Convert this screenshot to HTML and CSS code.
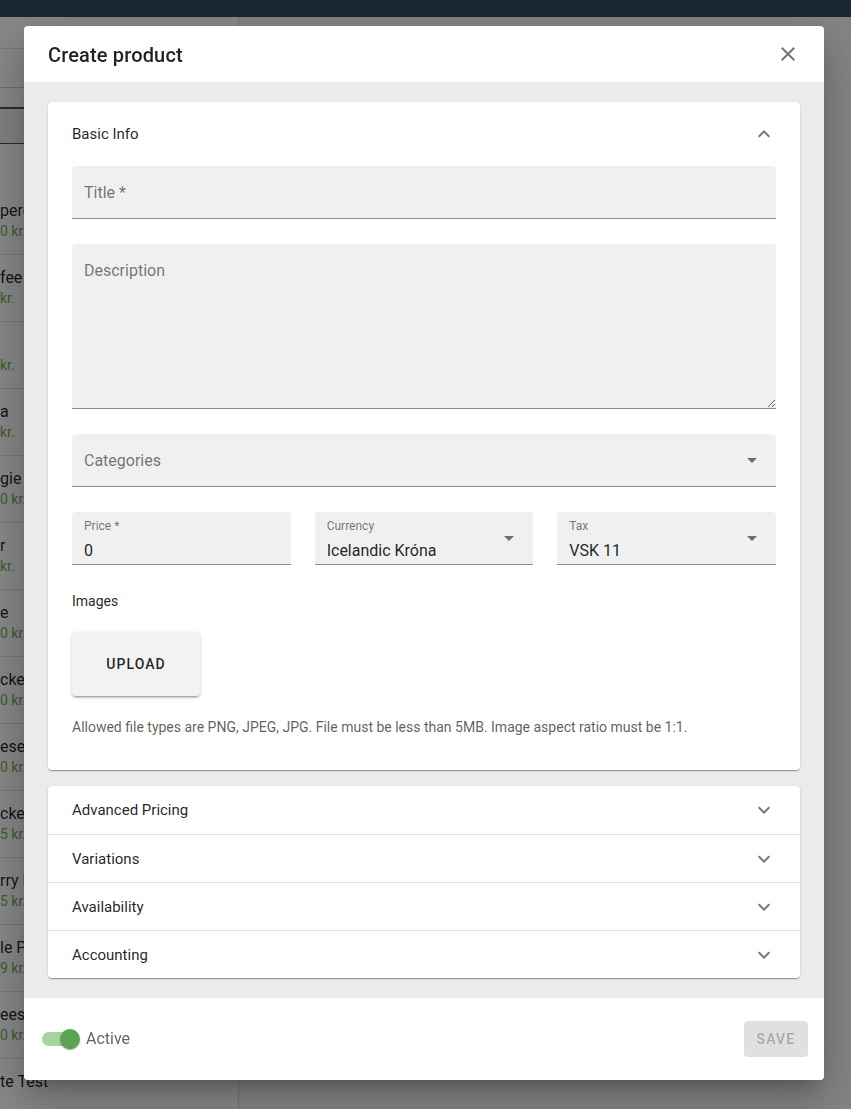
FILE: index.html
```html
<!DOCTYPE html>
<html lang="en">
<head>
<meta charset="utf-8">
<title>Create product</title>
<link rel="stylesheet" href="styles.css">
</head>
<body>
<div class="page">
  <header class="appbar"></header>
  <div class="main">
    <aside class="sidebar">
      <div class="sb-toolbar"></div>
      <div class="sb-search"></div>
      <div class="sb-tabs-head"></div>
      <div class="sb-tabs"></div>
      <div class="sb-spacer"></div>
      <ul class="product-list">
        <li class="product"><span class="p-name">perc</span><span class="p-price">0 kr.</span></li>
        <li class="product"><span class="p-name">fee</span><span class="p-price">kr.</span></li>
        <li class="product"><span class="p-name">&nbsp;</span><span class="p-price">kr.</span></li>
        <li class="product"><span class="p-name">a</span><span class="p-price">kr.</span></li>
        <li class="product"><span class="p-name">gie</span><span class="p-price">0 kr.</span></li>
        <li class="product"><span class="p-name">r</span><span class="p-price">kr.</span></li>
        <li class="product"><span class="p-name">e</span><span class="p-price">0 kr.</span></li>
        <li class="product"><span class="p-name">cker</span><span class="p-price">0 kr.</span></li>
        <li class="product"><span class="p-name">ese</span><span class="p-price">0 kr.</span></li>
        <li class="product"><span class="p-name">cker</span><span class="p-price">5 kr.</span></li>
        <li class="product"><span class="p-name">rry P</span><span class="p-price">5 kr.</span></li>
        <li class="product"><span class="p-name">le P</span><span class="p-price">9 kr.</span></li>
        <li class="product"><span class="p-name">ees</span><span class="p-price">0 kr.</span></li>
        <li class="product"><span class="p-name">te Test</span></li>
      </ul>
    </aside>
    <section class="workspace"></section>
  </div>
</div>

<div class="backdrop"></div>

<div class="dialog" role="dialog" aria-labelledby="dlg-title">
  <div class="dialog-header">
    <h2 class="dialog-title" id="dlg-title">Create product</h2>
    <button class="icon-btn" type="button" aria-label="Close">
      <svg class="icon" viewBox="0 0 24 24" width="24" height="24"><path fill="currentColor" d="M19 6.41L17.59 5 12 10.59 6.41 5 5 6.41 10.59 12 5 17.59 6.41 19 12 13.41 17.59 19 19 17.59 13.41 12z"/></svg>
    </button>
  </div>

  <div class="dialog-content">
    <div class="panel">
      <div class="panel-summary">
        <span class="panel-title">Basic Info</span>
        <svg class="icon" viewBox="0 0 24 24" width="24" height="24"><path fill="currentColor" d="M12 8l-6 6 1.41 1.41L12 10.83l4.59 4.58L18 14z"/></svg>
      </div>
      <div class="panel-details">
        <div class="field field-line"><span class="field-label">Title *</span></div>
        <div class="field field-desc">
          <span class="field-label desc-label">Description</span>
          <textarea class="desc-input" aria-label="Description"></textarea>
        </div>
        <div class="field field-line">
          <span class="field-label">Categories</span>
          <svg class="icon arrow" viewBox="0 0 24 24" width="24" height="24"><path fill="currentColor" d="M7 10l5 5 5-5z"/></svg>
        </div>
        <div class="field-row">
          <div class="field field-small">
            <div class="field-text"><span class="shrink-label">Price *</span><span class="field-value">0</span></div>
          </div>
          <div class="field field-small">
            <div class="field-text"><span class="shrink-label">Currency</span><span class="field-value">Icelandic Króna</span></div>
            <svg class="icon arrow" viewBox="0 0 24 24" width="24" height="24"><path fill="currentColor" d="M7 10l5 5 5-5z"/></svg>
          </div>
          <div class="field field-small">
            <div class="field-text"><span class="shrink-label">Tax</span><span class="field-value">VSK 11</span></div>
            <svg class="icon arrow" viewBox="0 0 24 24" width="24" height="24"><path fill="currentColor" d="M7 10l5 5 5-5z"/></svg>
          </div>
        </div>
        <div class="images-label">Images</div>
        <button class="upload-btn" type="button">UPLOAD</button>
        <p class="helper">Allowed file types are PNG, JPEG, JPG. File must be less than 5MB. Image aspect ratio must be 1:1.</p>
      </div>
    </div>

    <div class="panel panel-list">
      <div class="panel-row"><span class="panel-title">Advanced Pricing</span><svg class="icon" viewBox="0 0 24 24" width="24" height="24"><path fill="currentColor" d="M16.59 8.59L12 13.17 7.41 8.59 6 10l6 6 6-6z"/></svg></div>
      <div class="panel-row"><span class="panel-title">Variations</span><svg class="icon" viewBox="0 0 24 24" width="24" height="24"><path fill="currentColor" d="M16.59 8.59L12 13.17 7.41 8.59 6 10l6 6 6-6z"/></svg></div>
      <div class="panel-row"><span class="panel-title">Availability</span><svg class="icon" viewBox="0 0 24 24" width="24" height="24"><path fill="currentColor" d="M16.59 8.59L12 13.17 7.41 8.59 6 10l6 6 6-6z"/></svg></div>
      <div class="panel-row"><span class="panel-title">Accounting</span><svg class="icon" viewBox="0 0 24 24" width="24" height="24"><path fill="currentColor" d="M16.59 8.59L12 13.17 7.41 8.59 6 10l6 6 6-6z"/></svg></div>
    </div>
  </div>

  <div class="dialog-footer">
    <label class="switch-label">
      <span class="switch"><span class="switch-track"></span><span class="switch-thumb"></span></span>
      <span class="switch-text">Active</span>
    </label>
    <button class="save-btn" type="button" disabled>SAVE</button>
  </div>
</div>
</body>
</html>
```

FILE: styles.css
```css
* { box-sizing: border-box; }

html, body {
  margin: 0;
  height: 100%;
}

body {
  font-family: Roboto, "Liberation Sans", Arial, sans-serif;
  color: rgba(0, 0, 0, 0.87);
  background: #fafafa;
  overflow: hidden;
}

/* ---------- background page ---------- */
.page {
  height: 100vh;
  display: flex;
  flex-direction: column;
}

.appbar {
  flex: none;
  height: 17px;
  background: #314a60;
}

.main {
  flex: 1;
  display: flex;
  min-height: 0;
}

.sidebar {
  flex: none;
  width: 239px;
  background: #fff;
  border-right: 1px solid #dcdcdc;
  overflow: hidden;
}

.sb-toolbar {
  height: 32px;
  border-bottom: 1px solid #e4e4e4;
}

.sb-search {
  height: 39px;
  border-bottom: 1px solid #cfcfcf;
}

.sb-tabs-head {
  height: 21px;
  border-bottom: 2px solid #3f5166;
}

.sb-tabs {
  height: 35px;
  background: #f2f2f2;
  border-bottom: 1px solid #3f5166;
}

.sb-spacer {
  height: 44px;
}

.product-list {
  list-style: none;
  margin: 0;
  padding: 0;
}

.product {
  height: 67px;
  padding-top: 13px;
  border-bottom: 1px solid #e0e0e0;
  display: flex;
  flex-direction: column;
  white-space: nowrap;
}

.p-name {
  font-size: 16px;
  line-height: 20px;
}

.p-price {
  font-size: 14px;
  line-height: 20px;
  color: #6fae55;
}

.workspace {
  flex: 1;
  background: #fafafa;
}

.backdrop {
  position: fixed;
  inset: 0;
  background: rgba(0, 0, 0, 0.47);
}

/* ---------- dialog ---------- */
.dialog {
  position: fixed;
  top: 26px;
  left: 24px;
  width: 800px;
  height: 1054px;
  background: #fff;
  border-radius: 4px;
  overflow: hidden;
  display: flex;
  flex-direction: column;
  box-shadow: 0 11px 15px -7px rgba(0, 0, 0, 0.2),
              0 24px 38px 3px rgba(0, 0, 0, 0.14),
              0 9px 46px 8px rgba(0, 0, 0, 0.12);
}

.dialog-header {
  flex: none;
  height: 56px;
  display: flex;
  align-items: center;
  justify-content: space-between;
  padding: 0 12px 0 24px;
}

.dialog-title {
  margin: 0;
  padding-top: 1px;
  font-size: 20px;
  font-weight: 500;
  line-height: 32px;
  letter-spacing: 0.0075em;
}

.icon {
  display: block;
  flex: none;
  color: rgba(0, 0, 0, 0.54);
}

.icon-btn {
  width: 48px;
  height: 48px;
  padding: 12px;
  border: 0;
  background: none;
  display: flex;
  align-items: center;
  justify-content: center;
}

.dialog-content {
  flex: 1;
  background: #ebebeb;
  padding: 20px 24px;
  display: flex;
  flex-direction: column;
  gap: 16px;
}

.panel {
  background: #fff;
  border-radius: 4px;
  box-shadow: 0 2px 1px -1px rgba(0, 0, 0, 0.2),
              0 1px 1px 0 rgba(0, 0, 0, 0.14),
              0 1px 3px 0 rgba(0, 0, 0, 0.12);
}

.panel-summary {
  height: 64px;
  display: flex;
  align-items: center;
  justify-content: space-between;
  padding: 0 24px;
}

.panel-title {
  font-size: 15px;
  line-height: 20px;
}

.panel-details {
  display: flex;
  flex-direction: column;
  padding: 0 24px 33px;
}

/* fields */
.field {
  height: 53px;
  background: rgba(0, 0, 0, 0.06);
  border-radius: 4px 4px 0 0;
  border-bottom: 1px solid rgba(0, 0, 0, 0.42);
  margin-bottom: 25px;
}

.field-line {
  display: flex;
  align-items: center;
  justify-content: space-between;
  padding: 0 12px;
}

.field-label {
  font-size: 16px;
  line-height: 19px;
  color: rgba(0, 0, 0, 0.54);
}

.field-desc {
  height: 165px;
  display: flex;
  flex-direction: column;
}

.desc-label {
  margin: 17px 0 0 12px;
}

.desc-input {
  flex: 1;
  width: 100%;
  margin: 0;
  border: 0;
  padding: 4px 12px;
  background: transparent;
  resize: vertical;
  outline: none;
  font: inherit;
}

.field-row {
  display: grid;
  grid-template-columns: repeat(3, 1fr);
  gap: 24px;
}

.field-row .field {
  margin-bottom: 0;
}

.field-small {
  display: flex;
  align-items: center;
  padding: 0 12px;
}

.field-text {
  flex: 1;
  align-self: stretch;
  display: flex;
  flex-direction: column;
  padding-top: 7px;
}

.shrink-label {
  font-size: 12px;
  line-height: 14px;
  color: rgba(0, 0, 0, 0.54);
}

.field-value {
  margin-top: 8px;
  font-size: 16px;
  line-height: 19px;
}

.images-label {
  margin-top: 26px;
  font-size: 14px;
  line-height: 20px;
}

.upload-btn {
  align-self: flex-start;
  margin-top: 21px;
  width: 128px;
  height: 64px;
  border: 0;
  border-radius: 4px;
  background: #f2f2f2;
  color: rgba(0, 0, 0, 0.87);
  font-family: inherit;
  font-size: 14px;
  font-weight: 500;
  letter-spacing: 1.1px;
  box-shadow: 0 3px 1px -2px rgba(0, 0, 0, 0.2),
              0 2px 2px 0 rgba(0, 0, 0, 0.14),
              0 1px 5px 0 rgba(0, 0, 0, 0.12);
}

.helper {
  margin: 21px 0 0;
  font-size: 14px;
  line-height: 20px;
  color: rgba(0, 0, 0, 0.65);
}

/* collapsed panels */
.panel-row {
  height: 48px;
  display: flex;
  align-items: center;
  justify-content: space-between;
  padding: 0 24px;
}

.panel-row + .panel-row {
  border-top: 1px solid #e0e0e0;
}

/* footer */
.dialog-footer {
  flex: none;
  height: 82px;
  display: flex;
  align-items: center;
  justify-content: space-between;
  padding: 0 16px 0 18px;
}

.switch-label {
  display: flex;
  align-items: center;
  gap: 6px;
}

.switch {
  position: relative;
  width: 38px;
  height: 20px;
  display: flex;
  align-items: center;
}

.switch-track {
  width: 34px;
  height: 14px;
  border-radius: 7px;
  background: #a6d3a1;
}

.switch-thumb {
  position: absolute;
  left: 18px;
  top: 0;
  width: 20px;
  height: 20px;
  border-radius: 50%;
  background: #5aa552;
  box-shadow: 0 2px 1px -1px rgba(0, 0, 0, 0.2),
              0 1px 1px 0 rgba(0, 0, 0, 0.14),
              0 1px 3px 0 rgba(0, 0, 0, 0.12);
}

.switch-text {
  font-size: 16px;
  line-height: 20px;
  color: #666;
}

.save-btn {
  width: 64px;
  height: 36px;
  border: 0;
  border-radius: 4px;
  background: rgba(0, 0, 0, 0.12);
  color: rgba(0, 0, 0, 0.26);
  font-family: inherit;
  font-size: 14px;
  font-weight: 500;
  letter-spacing: 1.2px;
}
```
